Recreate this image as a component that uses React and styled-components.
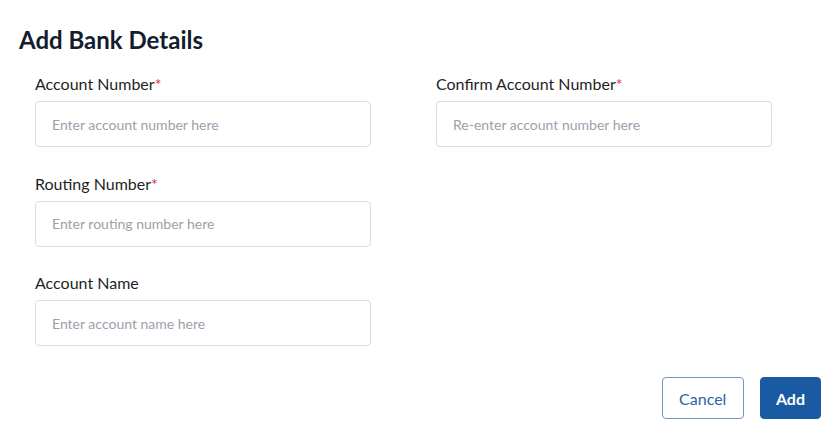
import React from "react";
import styled, { createGlobalStyle } from "styled-components";

const GlobalStyle = createGlobalStyle`
  html, body {
    margin: 0;
    padding: 0;
    background: #ffffff;
    font-family: Lato, "Open Sans", sans-serif;
  }
  * {
    box-sizing: border-box;
  }
`;

const Page = styled.div`
  width: 840px;
  height: 438px;
  padding: 24px 19px 0 19px;
`;

const Title = styled.h1`
  margin: 0;
  font-size: 24px;
  line-height: 32px;
  font-weight: 700;
  color: #141c2e;
`;

const Form = styled.div`
  display: grid;
  grid-template-columns: 336px 336px;
  column-gap: 65px;
  row-gap: 26.5px;
  padding: 18px 0 0 16px;
`;

const Field = styled.div`
  display: flex;
  flex-direction: column;
  grid-column: ${(p) => p.col || "auto"};
`;

const Label = styled.label`
  font-size: 16px;
  line-height: 20px;
  color: #1f1f1f;
  margin-bottom: 7px;
`;

const Star = styled.span`
  color: #e03131;
`;

const Input = styled.input`
  height: 46px;
  width: 336px;
  border: 1px solid #dcdee3;
  border-radius: 4px;
  padding: 0 16px;
  font-family: Lato, sans-serif;
  font-size: 14px;
  color: #222;
  outline: none;
  &::placeholder {
    color: #9ba1ab;
  }
`;

const Actions = styled.div`
  display: flex;
  justify-content: flex-end;
  gap: 16px;
  margin-top: 31px;
`;

const Button = styled.button`
  height: 42px;
  padding: ${(p) => (p.primary ? "0 15px" : "0 16.5px")};
  border-radius: 4px;
  font-family: Lato, sans-serif;
  font-size: 16px;
  cursor: pointer;
  border: 1px solid;
  background: ${(p) => (p.primary ? "#1a5aa3" : "#ffffff")};
  color: ${(p) => (p.primary ? "#ffffff" : "#2d63a8")};
  font-weight: ${(p) => (p.primary ? 700 : 400)};
  border-color: ${(p) => (p.primary ? "#1a5aa3" : "#6f95c6")};
`;

const fields = [
  { label: "Account Number", req: true, ph: "Enter account number here", col: "1" },
  { label: "Confirm Account Number", req: true, ph: "Re-enter account number here", col: "2" },
  { label: "Routing Number", req: true, ph: "Enter routing number here", col: "1" },
  { label: "Account Name", req: false, ph: "Enter account name here", col: "1" },
];

export default function App() {
  return (
    <Page>
      <GlobalStyle />
      <Title>Add Bank Details</Title>
      <Form>
        {fields.map((f) => (
          <Field key={f.label} col={f.col}>
            <Label>
              {f.label}
              {f.req && <Star>*</Star>}
            </Label>
            <Input placeholder={f.ph} />
          </Field>
        ))}
      </Form>
      <Actions>
        <Button>Cancel</Button>
        <Button primary>Add</Button>
      </Actions>
    </Page>
  );
}
